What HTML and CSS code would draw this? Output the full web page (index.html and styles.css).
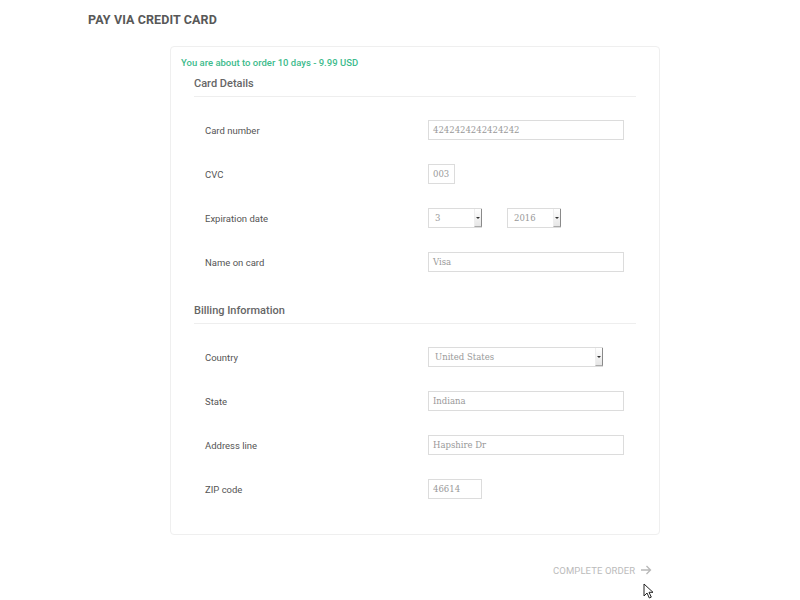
FILE: index.html
```html
<!DOCTYPE html>
<html>
<head>
<meta charset="utf-8">
<link rel="stylesheet" href="styles.css">
</head>
<body>
<div class="page">
  <h1 class="title">PAY VIA CREDIT CARD</h1>
  <div class="card">
    <div class="notice">You are about to order 10 days - 9.99 USD</div>
    <div class="section">
      <div class="section-head">Card Details</div>
      <div class="rows">
        <div class="row"><span class="label">Card number</span><span class="field wide">4242424242424242</span></div>
        <div class="row"><span class="label">CVC</span><span class="field cvc">003</span></div>
        <div class="row"><span class="label">Expiration date</span>
          <span class="select month"><span class="val">3</span><span class="btn"><span class="tri"></span></span></span>
          <span class="select year"><span class="val">2016</span><span class="btn"><span class="tri"></span></span></span>
        </div>
        <div class="row"><span class="label">Name on card</span><span class="field wide">Visa</span></div>
      </div>
    </div>
    <div class="section billing">
      <div class="section-head">Billing Information</div>
      <div class="rows">
        <div class="row"><span class="label">Country</span>
          <span class="select country"><span class="val">United States</span><span class="btn"><span class="tri"></span></span></span>
        </div>
        <div class="row"><span class="label">State</span><span class="field wide">Indiana</span></div>
        <div class="row"><span class="label">Address line</span><span class="field wide">Hapshire Dr</span></div>
        <div class="row"><span class="label">ZIP code</span><span class="field zip">46614</span></div>
      </div>
    </div>
  </div>
  <div class="actions">
    <span class="complete">COMPLETE ORDER</span>
    <svg class="arrow" width="12" height="10" viewBox="0 0 12 10"><path d="M1 5H10.5M6.5 1L10.5 5L6.5 9" fill="none" stroke="#b8b8b8" stroke-width="1.3"/></svg>
  </div>
  <svg class="cursor" width="12" height="16" viewBox="0 0 12 16"><path d="M1 1V13L4 10L6.3 15L8.3 14.1L6 9.3H10Z" fill="#fff" stroke="#222" stroke-width="1"/></svg>
</div>
</body>
</html>
```
FILE: styles.css
```css
html, body {
  margin: 0;
  padding: 0;
  background: #fff;
}
.page {
  position: relative;
  width: 800px;
  height: 600px;
  padding-top: 12px;
  box-sizing: border-box;
  font-family: Roboto, "Liberation Sans", sans-serif;
}
.title {
  margin: 0 0 0 88px;
  font-size: 12.5px;
  line-height: 16px;
  font-weight: 700;
  color: #585858;
  letter-spacing: 0.1px;
}
.card {
  margin: 18px 0 0 170px;
  width: 490px;
  box-sizing: border-box;
  border: 1px solid #efefef;
  border-radius: 4px;
  padding: 10px 23px 23px 10px;
}
.notice {
  font-size: 9.5px;
  line-height: 12px;
  font-weight: 500;
  color: #3dbb8c;
}
.section {
  margin-left: 13px;
}
.section-head {
  margin-top: 8px;
  font-size: 11px;
  line-height: 14px;
  font-weight: 500;
  color: #666;
  padding-bottom: 5px;
  border-bottom: 1px solid #eeeeee;
}
.billing .section-head {
  margin-top: 20px;
}
.rows {
  margin-top: 11px;
  display: flex;
  flex-direction: column;
}
.row {
  height: 44px;
  display: flex;
  align-items: center;
  padding-left: 11px;
}
.label {
  width: 223px;
  flex: none;
  font-size: 9.5px;
  color: #555;
}
.field, .select {
  box-sizing: border-box;
  height: 20px;
  border: 1px solid #dcdcdc;
  font-family: "DejaVu Serif", "Liberation Serif", serif;
  font-size: 8.5px;
  font-variant-numeric: lining-nums;
  color: #999;
  display: flex;
  align-items: center;
  padding-left: 4px;
}
.wide { width: 196px; }
.cvc { width: 27px; }
.zip { width: 54px; }
.select {
  position: relative;
  padding-left: 6px;
}
.select .val { flex: 1; }
.month { width: 54px; margin-right: 25px; }
.year { width: 54px; }
.country { width: 175px; }
.btn {
  flex: none;
  width: 8px;
  height: 18px;
  background: linear-gradient(#ffffff, #e6e6e6);
  border-left: 1px solid #eee;
  border-right: 1px solid #8a8a8a;
  border-bottom: 1px solid #aaa;
  box-sizing: border-box;
  display: flex;
  align-items: center;
  justify-content: center;
  margin-right: -1px;
}
.tri {
  width: 0;
  height: 0;
  border-left: 2px solid transparent;
  border-right: 2px solid transparent;
  border-top: 2px solid #333;
}
.actions {
  margin: 28px 0 0 553px;
  display: flex;
  align-items: center;
  height: 14px;
}
.complete {
  font-size: 9.5px;
  color: #bbb;
  letter-spacing: 0.1px;
}
.arrow {
  margin-left: 5px;
}
.cursor {
  position: absolute;
  left: 643px;
  top: 583px;
}
```
